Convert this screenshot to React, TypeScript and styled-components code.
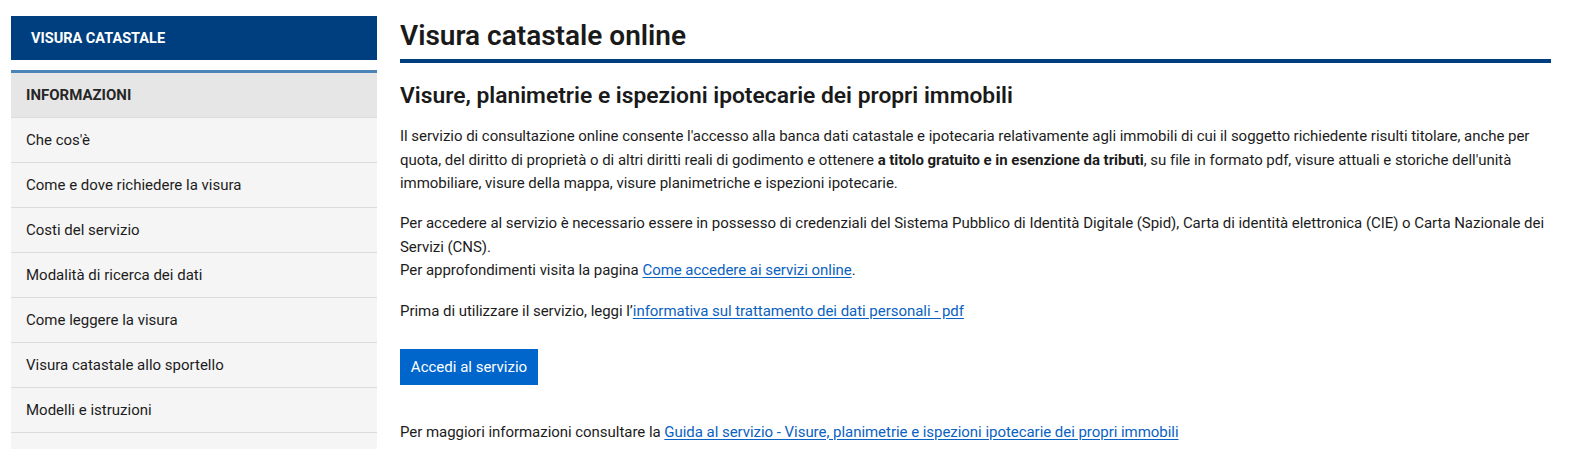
import React from "react";
import styled, { createGlobalStyle } from "styled-components";

const GlobalStyle = createGlobalStyle`
  html, body { margin: 0; padding: 0; background: #ffffff; }
  body { font-family: Roboto, "Liberation Sans", Arial, sans-serif; color: #1c1c1c; }
  * { box-sizing: border-box; }
`;

const Page = styled.div`
  display: grid;
  grid-template-columns: 366px 1151px;
  column-gap: 23px;
  padding: 16px 0 0 11px;
  height: 449px;
  overflow: hidden;
`;

const Sidebar = styled.nav`
  display: flex;
  flex-direction: column;
`;

const SideTitle = styled.div`
  height: 44px;
  background: #003f7f;
  color: #ffffff;
  font-weight: 700;
  font-size: 14.5px;
  text-transform: uppercase;
  display: flex;
  align-items: center;
  padding-left: 20px;
  margin-bottom: 10px;
`;

const Menu = styled.ul`
  list-style: none;
  margin: 0;
  padding: 0;
  border-top: 3px solid #4d84b7;
  background: #f5f5f5;
`;

const MenuItem = styled.li<{ $head?: boolean }>`
  height: 45px;
  display: flex;
  align-items: center;
  padding-left: 15px;
  border-bottom: 1px solid #dcdcdc;
  background: ${(p) => (p.$head ? "#e6e6e6" : "#f5f5f5")};
  font-size: 15px;
  font-weight: ${(p) => (p.$head ? 700 : 400)};
  color: ${(p) => (p.$head ? "#262626" : "#1c1c1c")};
  text-transform: ${(p) => (p.$head ? "uppercase" : "none")};
`;

const Main = styled.main`
  display: flex;
  flex-direction: column;
`;

const Title = styled.h1`
  margin: 0;
  font-size: 28px;
  font-weight: 600;
  line-height: 40px;
  padding-bottom: 3px;
  border-bottom: 4px solid #003f7f;
  color: #1a1a1a;
`;

const Subtitle = styled.h2`
  margin: 18px 0 14px;
  font-size: 22.8px;
  font-weight: 600;
  line-height: 30px;
  color: #1a1a1a;
`;

const Para = styled.p<{ $gap?: number }>`
  margin: 0 0 ${(p) => p.$gap ?? 16.5}px;
  font-size: 15px;
  letter-spacing: -0.04px;
  line-height: 23.5px;
  color: #1c1c1c;
`;

const Link = styled.a`
  color: #0a62c2;
  text-decoration: underline;
  text-underline-offset: 2px;
`;

const Button = styled.a`
  align-self: flex-start;
  display: inline-flex;
  align-items: center;
  justify-content: center;
  width: 138px;
  height: 36px;
  background: #0066cc;
  color: #ffffff;
  font-size: 15px;
  text-decoration: none;
  margin-bottom: 35.5px;
`;

const items = [
  "Che cos'è",
  "Come e dove richiedere la visura",
  "Costi del servizio",
  "Modalità di ricerca dei dati",
  "Come leggere la visura",
  "Visura catastale allo sportello",
  "Modelli e istruzioni",
];

export default function App() {
  return (
    <>
      <GlobalStyle />
      <Page>
        <Sidebar>
          <SideTitle>Visura catastale</SideTitle>
          <Menu>
            <MenuItem $head>Informazioni</MenuItem>
            {items.map((t) => (
              <MenuItem key={t}>{t}</MenuItem>
            ))}
            <MenuItem aria-hidden="true" />
          </Menu>
        </Sidebar>
        <Main>
          <Title>Visura catastale online</Title>
          <Subtitle>Visure, planimetrie e ispezioni ipotecarie dei propri immobili</Subtitle>
          <Para>
            Il servizio di consultazione online consente l'accesso alla banca dati catastale e ipotecaria
            relativamente agli immobili di cui il soggetto richiedente risulti titolare, anche per quota, del
            diritto di proprietà o di altri diritti reali di godimento e ottenere{" "}
            <strong>a titolo gratuito e in esenzione da tributi</strong>, su file in formato pdf, visure attuali e
            storiche dell'unità immobiliare, visure della mappa, visure planimetriche e ispezioni ipotecarie.
          </Para>
          <Para $gap={17.5}>
            Per accedere al servizio è necessario essere in possesso di credenziali del Sistema Pubblico di
            Identità Digitale (Spid), Carta di identità elettronica (CIE) o Carta Nazionale dei Servizi (CNS).
            <br />
            Per approfondimenti visita la pagina <Link href="#">Come accedere ai servizi online</Link>.
          </Para>
          <Para $gap={25.5}>
            Prima di utilizzare il servizio, leggi l’
            <Link href="#">informativa sul trattamento dei dati personali - pdf</Link>
          </Para>
          <Button href="#">Accedi al servizio</Button>
          <Para>
            Per maggiori informazioni consultare la{" "}
            <Link href="#">Guida al servizio - Visure, planimetrie e ispezioni ipotecarie dei propri immobili</Link>
          </Para>
        </Main>
      </Page>
    </>
  );
}
